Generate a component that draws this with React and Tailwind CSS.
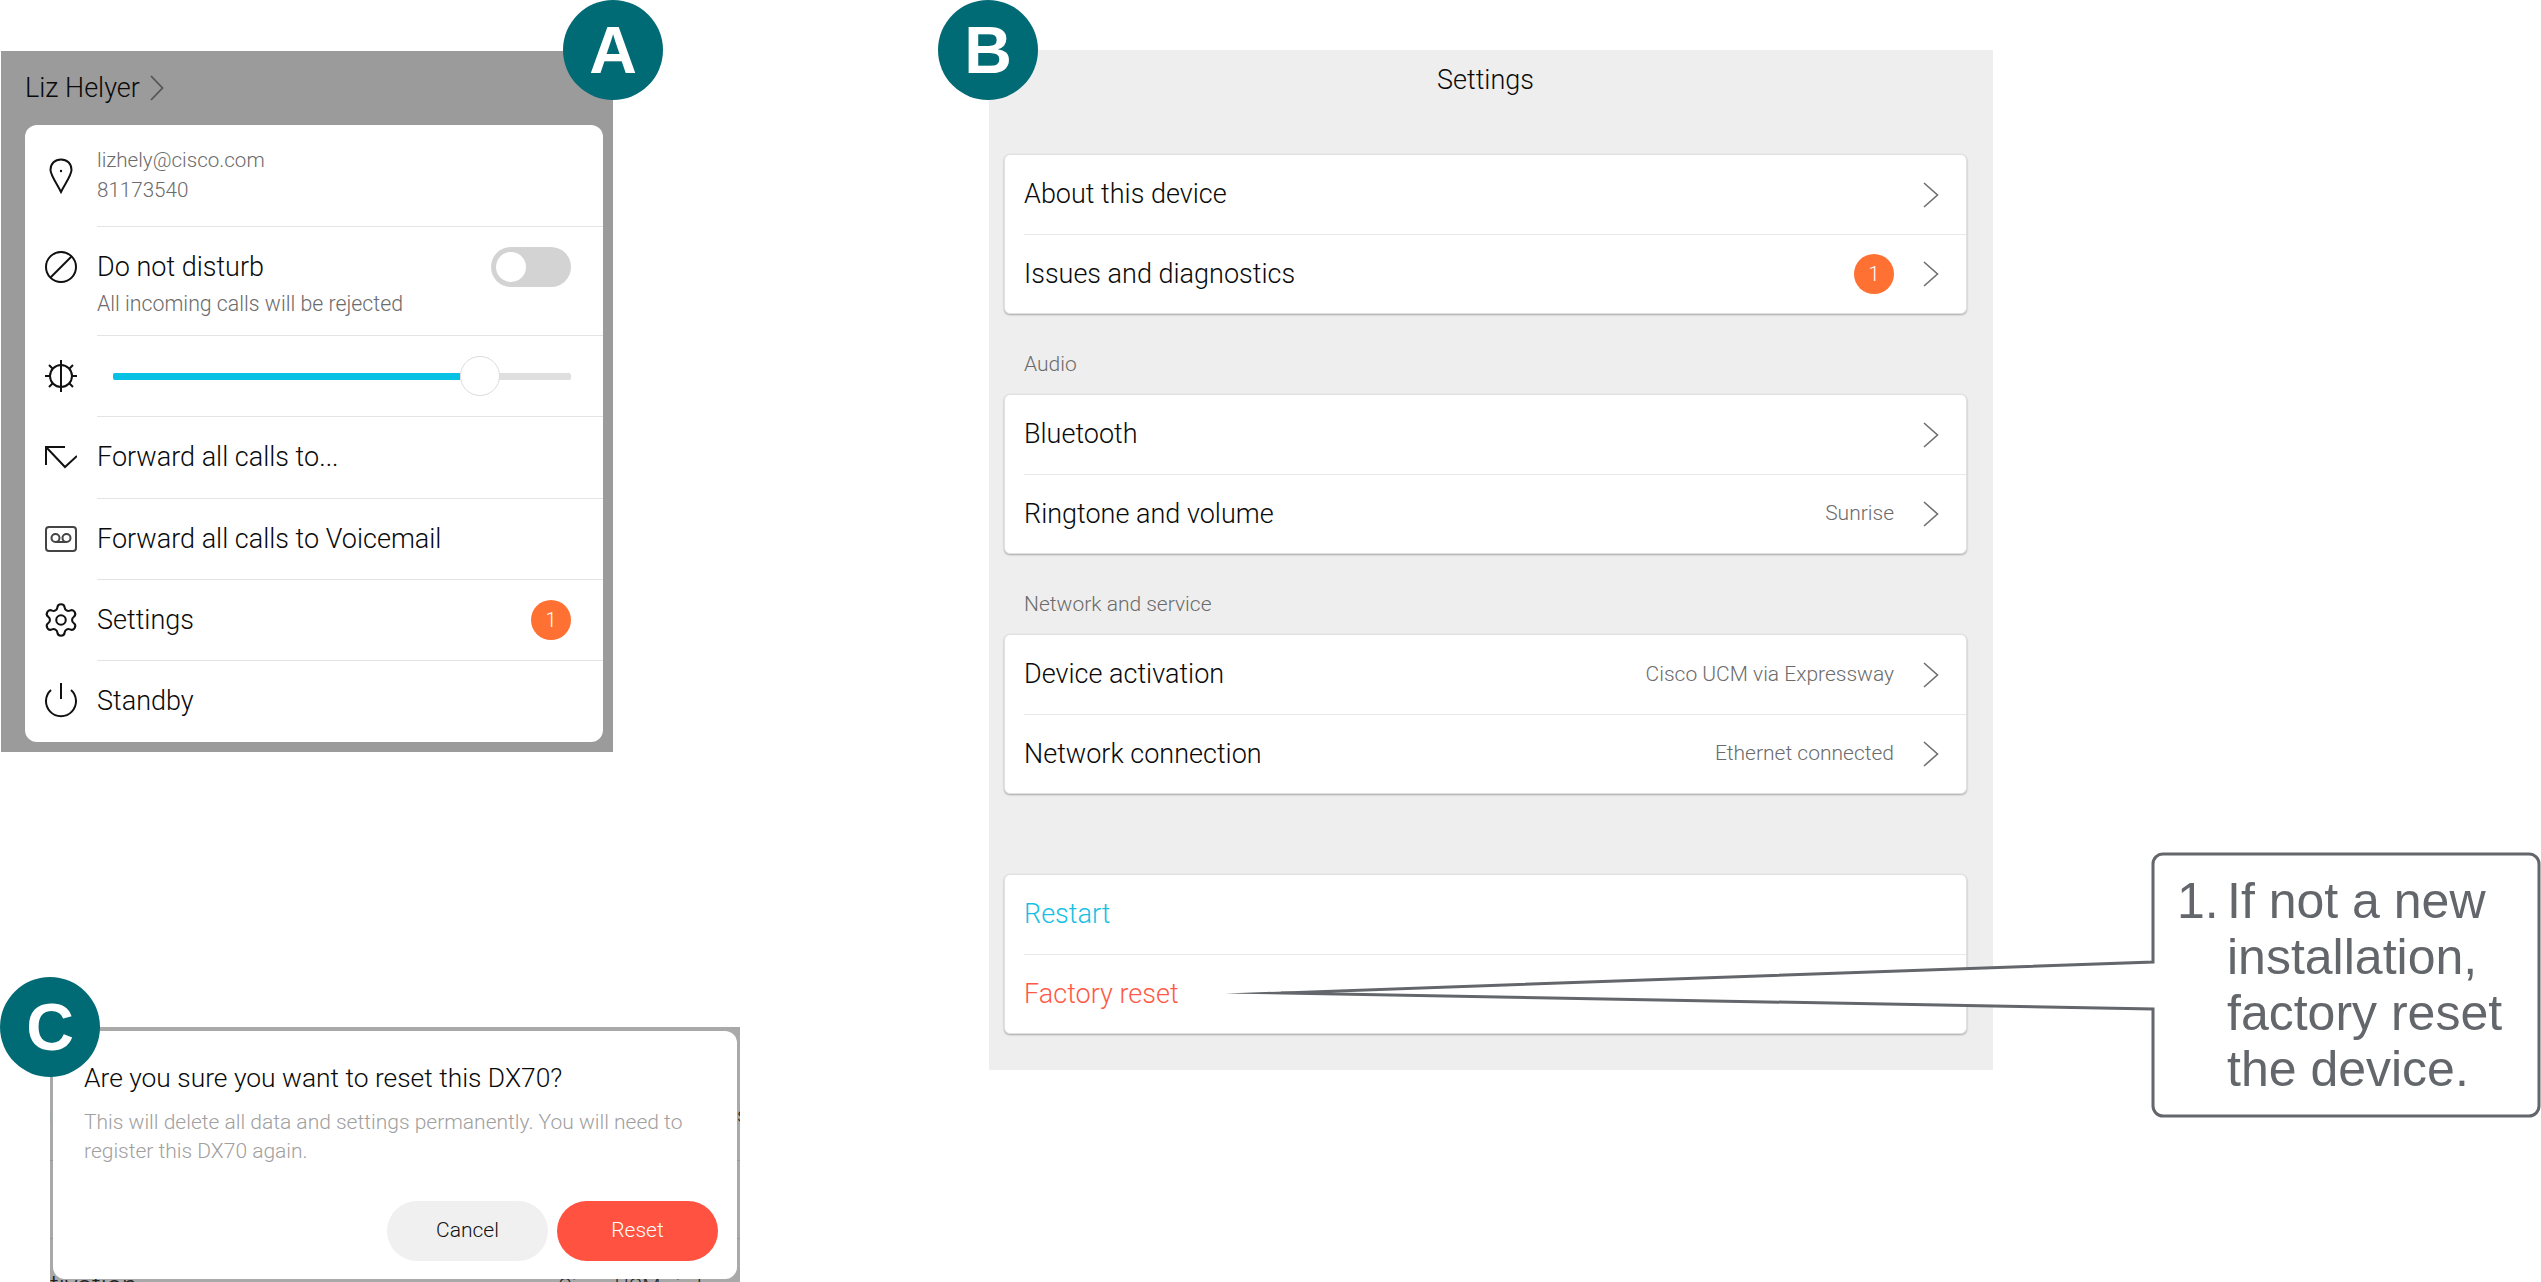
import React from "react";
import { Settings } from "lucide-react";

const Chevron = () => (
  <svg width="16" height="26" viewBox="0 0 16 26" fill="none" className="shrink-0">
    <path d="M1 1 L14.5 13 L1 25" stroke="#6f6f6f" strokeWidth="1.6" />
  </svg>
);

const Badge = () => (
  <span className="flex h-[40px] w-[40px] items-center justify-center rounded-full bg-[#ff7033] text-[20px] text-white">
    1
  </span>
);

const Letter = ({ children, className }) => (
  <div
    className={`absolute z-20 flex h-[100px] w-[100px] items-center justify-center rounded-full bg-[#006a75] font-['Liberation_Sans'] text-[66px] font-bold text-white ${className}`}
  >
    {children}
  </div>
);

const Pin = () => (
  <svg width="32" height="36" viewBox="0 0 32 36" fill="none" stroke="#111" strokeWidth="2">
    <path d="M16 34 C12 26 5.5 17 5.5 12 C5.5 5.5 10 1.5 16 1.5 C22 1.5 26.5 5.5 26.5 12 C26.5 17 20 26 16 34 Z" />
    <circle cx="16" cy="13" r="1.2" fill="#111" stroke="none" />
  </svg>
);

const NoEntry = () => (
  <svg width="32" height="32" viewBox="0 0 32 32" fill="none" stroke="#111" strokeWidth="2">
    <circle cx="16" cy="16" r="15" />
    <path d="M5.5 26.5 L26.5 5.5" />
  </svg>
);

const Brightness = () => (
  <svg width="32" height="32" viewBox="0 0 32 32" fill="none" stroke="#111" strokeWidth="2">
    <circle cx="16" cy="16" r="11" />
    <path d="M16 0 V32 M0 16 H5 M27 16 H32 M4 5 L8 9 M28 5 L24 9 M4 27 L8 23 M28 27 L24 23" />
  </svg>
);

const ForwardIcon = () => (
  <svg width="32" height="24" viewBox="0 0 32 24" fill="none" stroke="#111" strokeWidth="2">
    <path d="M1 20 V2 H20 M1 2 L20 22 L32 11" />
  </svg>
);

const Voicemail = () => (
  <svg width="32" height="26" viewBox="0 0 32 26" fill="none" stroke="#444" strokeWidth="2">
    <rect x="1" y="1" width="30" height="24" rx="3" />
    <circle cx="10.5" cy="12" r="4" />
    <circle cx="21.5" cy="12" r="4" />
    <path d="M10.5 16 H21.5" />
  </svg>
);

const Power = () => (
  <svg width="32" height="36" viewBox="0 0 32 36" fill="none" stroke="#111" strokeWidth="2">
    <path d="M6 7 A15 15 0 1 0 26 7" />
    <path d="M16 0 V16" />
  </svg>
);

const MenuRow = ({ icon, height, children }) => (
  <div className="flex items-stretch pl-5" style={{ height }}>
    <div className="flex w-8 shrink-0 items-center justify-center">{icon}</div>
    <div className="ml-5 flex flex-1 items-center border-t border-[#e4e4e4] pr-8">
      {children}
    </div>
  </div>
);

const SettingsRow = ({ label, value, badge, chevron = true, color = "text-[#0a0a0a]", first }) => (
  <div className="flex h-[79px] items-stretch pl-[19px]">
    <div
      className={`flex flex-1 items-center justify-between pr-[27px] ${first ? "" : "border-t border-[#e8e8e8]"}`}
    >
      <span className={`text-[27px] ${color}`}>{label}</span>
      {chevron && (
        <div className="flex items-center gap-[29px]">
          {badge && <Badge />}
          {value && <span className="text-[21px] text-[#6b6b6b]">{value}</span>}
          <Chevron />
        </div>
      )}
    </div>
  </div>
);

const SettingsCard = ({ children }) => (
  <div className="rounded-[6px] border border-[#e0e0e0] bg-white shadow-[0_1px_2px_rgba(0,0,0,0.3)]">
    {children}
  </div>
);

export default function App() {
  return (
    <div className="relative flex h-[1282px] w-[2541px] overflow-hidden bg-white font-['Roboto',sans-serif] font-light">
      {/* left column, panels A and C */}
      <div className="flex w-[989px] shrink-0 flex-col">
        <div className="relative ml-[1px] mt-[51px] h-[701px] w-[612px] bg-[#9b9b9b] pl-[24px] pr-[10px]">
          <Letter className="-top-[51px] left-[562px]">A</Letter>
          <div className="flex h-[74px] items-center gap-[10px]">
            <span className="text-[27px] text-[#0a0a0a]">Liz Helyer</span>
            <svg width="14" height="26" viewBox="0 0 14 26" fill="none">
              <path d="M1 1 L12.5 13 L1 25" stroke="#555" strokeWidth="1.8" />
            </svg>
          </div>
          <div className="overflow-hidden rounded-[12px] bg-white">
            <div className="flex h-[101px] items-stretch pl-5">
              <div className="flex w-8 shrink-0 items-center justify-center"><Pin /></div>
              <div className="ml-5 flex flex-col justify-center gap-[8px] pb-[1px] text-[20.6px] leading-[22px] text-[#6b6b6b]">
                <span>lizhely@cisco.com</span>
                <span>81173540</span>
              </div>
            </div>
            <div className="flex h-[109px] items-stretch pl-5">
              <div className="flex w-8 shrink-0 items-start justify-center pt-[25px]"><NoEntry /></div>
              <div className="ml-5 flex flex-1 flex-col border-t border-[#e4e4e4] pr-8 pt-[24px]">
                <div className="flex h-[32px] items-center justify-between">
                  <span className="text-[27px] text-[#0a0a0a]">Do not disturb</span>
                  <div className="flex h-[40px] w-[80px] items-center rounded-full bg-[#d3d3d3] pl-[5px]">
                    <div className="h-[30px] w-[30px] rounded-full bg-white" />
                  </div>
                </div>
                <span className="mt-[9px] text-[21.3px] leading-[24px] text-[#6b6b6b]">All incoming calls will be rejected</span>
              </div>
            </div>
            <MenuRow height={81} icon={<Brightness />}>
              <div className="ml-[16px] flex h-[7px] flex-1 items-center rounded-[2px] bg-[#dfdfdf]">
                <div className="h-full w-[347px] rounded-l-[2px] bg-[#07c1e4]" />
                <div className="h-[40px] w-[40px] rounded-full border border-[#dcdcdc] bg-white" />
              </div>
            </MenuRow>
            <MenuRow height={82} icon={<ForwardIcon />}>
              <span className="text-[27px] text-[#0a0a0a]">Forward all calls to...</span>
            </MenuRow>
            <MenuRow height={81} icon={<Voicemail />}>
              <span className="text-[27px] text-[#0a0a0a]">Forward all calls to Voicemail</span>
            </MenuRow>
            <MenuRow height={81} icon={<Settings size={38} strokeWidth={1.3} color="#111" className="shrink-0" />}>
              <div className="flex flex-1 items-center justify-between">
                <span className="text-[27px] text-[#0a0a0a]">Settings</span>
                <Badge />
              </div>
            </MenuRow>
            <MenuRow height={82} icon={<Power />}>
              <span className="text-[27px] text-[#0a0a0a]">Standby</span>
            </MenuRow>
          </div>
        </div>

        <div className="relative ml-[50px] mt-[275px] h-[255px] w-[690px] bg-[#a9a9a9]">
          <Letter className="-left-[50px] -top-[50px]">C</Letter>
          {/* what shows round the dialog from the page behind */}
          <div className="absolute inset-0 overflow-hidden text-[#222]">
            <div className="absolute inset-x-0 top-[133px] h-px bg-[#999]" />
            <div className="absolute inset-x-0 top-[211px] h-px bg-[#999]" />
            <span className="absolute -left-[10px] top-[76px] text-[21px] leading-[24px]">a</span>
            <span className="absolute left-[687px] top-[76px] text-[21px] leading-[24px]">s</span>
            <span className="absolute left-0 top-[243px] text-[27px] leading-[32px]">tivation</span>
            <span className="absolute left-[508px] top-[244px] whitespace-nowrap text-[21px] leading-[30px]">Cisco UCM via Expressway</span>
          </div>
          <div className="absolute left-[3px] right-[3px] top-[4px] flex h-[248px] flex-col rounded-[12px] bg-white pl-[31px] pr-[19px]">
            <h2 className="mt-[31px] text-[26.4px] font-light leading-[32px] text-[#0a0a0a]">Are you sure you want to reset this DX70?</h2>
            <p className="mt-[14px] w-[620px] text-[21px] leading-[29px] text-[#a0a0a0]">
              This will delete all data and settings permanently. You will need to register this DX70 again.
            </p>
            <div className="mt-auto mb-[18px] flex justify-end gap-[9px]">
              <button className="h-[60px] w-[161px] rounded-full bg-[#f0f0f0] text-[21px] text-[#111]">Cancel</button>
              <button className="h-[60px] w-[161px] rounded-full bg-[#ff5240] text-[21px] text-white">Reset</button>
            </div>
          </div>
        </div>
      </div>

      {/* panel B */}
      <div className="relative mt-[50px] flex h-[1020px] w-[1004px] flex-col bg-[#eeeeee] pl-[15px] pr-[26px]">
        <Letter className="-left-[51px] -top-[50px]">B</Letter>
        <h1 className="flex h-[60px] items-center justify-center text-[27px] font-light text-[#0a0a0a]">Settings</h1>
        <div className="mt-[44px]">
          <SettingsCard>
            <SettingsRow first label="About this device" />
            <SettingsRow label="Issues and diagnostics" badge />
          </SettingsCard>
        </div>
        <p className="mt-[38px] pl-[20px] text-[21px] leading-[24px] text-[#6b6b6b]">Audio</p>
        <div className="mt-[18px]">
          <SettingsCard>
            <SettingsRow first label="Bluetooth" />
            <SettingsRow label="Ringtone and volume" value="Sunrise" />
          </SettingsCard>
        </div>
        <p className="mt-[38px] pl-[20px] text-[21px] leading-[24px] text-[#6b6b6b]">Network and service</p>
        <div className="mt-[18px]">
          <SettingsCard>
            <SettingsRow first label="Device activation" value="Cisco UCM via Expressway" />
            <SettingsRow label="Network connection" value="Ethernet connected" />
          </SettingsCard>
        </div>
        <div className="mt-[80px]">
          <SettingsCard>
            <SettingsRow first label="Restart" chevron={false} color="text-[#17bfe3]" />
            <SettingsRow label="Factory reset" chevron={false} color="text-[#ff5a47]" />
          </SettingsCard>
        </div>
      </div>

      {/* callout over the page */}
      <svg className="absolute left-0 top-0 z-10" width="2541" height="1282" fill="none">
        <path
          d="M2153 962 V864 A10 10 0 0 1 2163 854 H2529 A10 10 0 0 1 2539 864 V1106 A10 10 0 0 1 2529 1116 H2163 A10 10 0 0 1 2153 1106 V1009 L1281 993 Z"
          fill="white"
          stroke="#63666a"
          strokeWidth="3"
          strokeMiterlimit="200"
        />
      </svg>
      <div className="absolute left-[2177px] top-[873px] z-10 flex font-['Liberation_Sans'] text-[50px] font-normal leading-[56px] text-[#63666a]">
        <span className="w-[50px]">1.</span>
        <span>
          If not a new
          <br />
          installation,
          <br />
          factory reset
          <br />
          the device.
        </span>
      </div>
    </div>
  );
}
